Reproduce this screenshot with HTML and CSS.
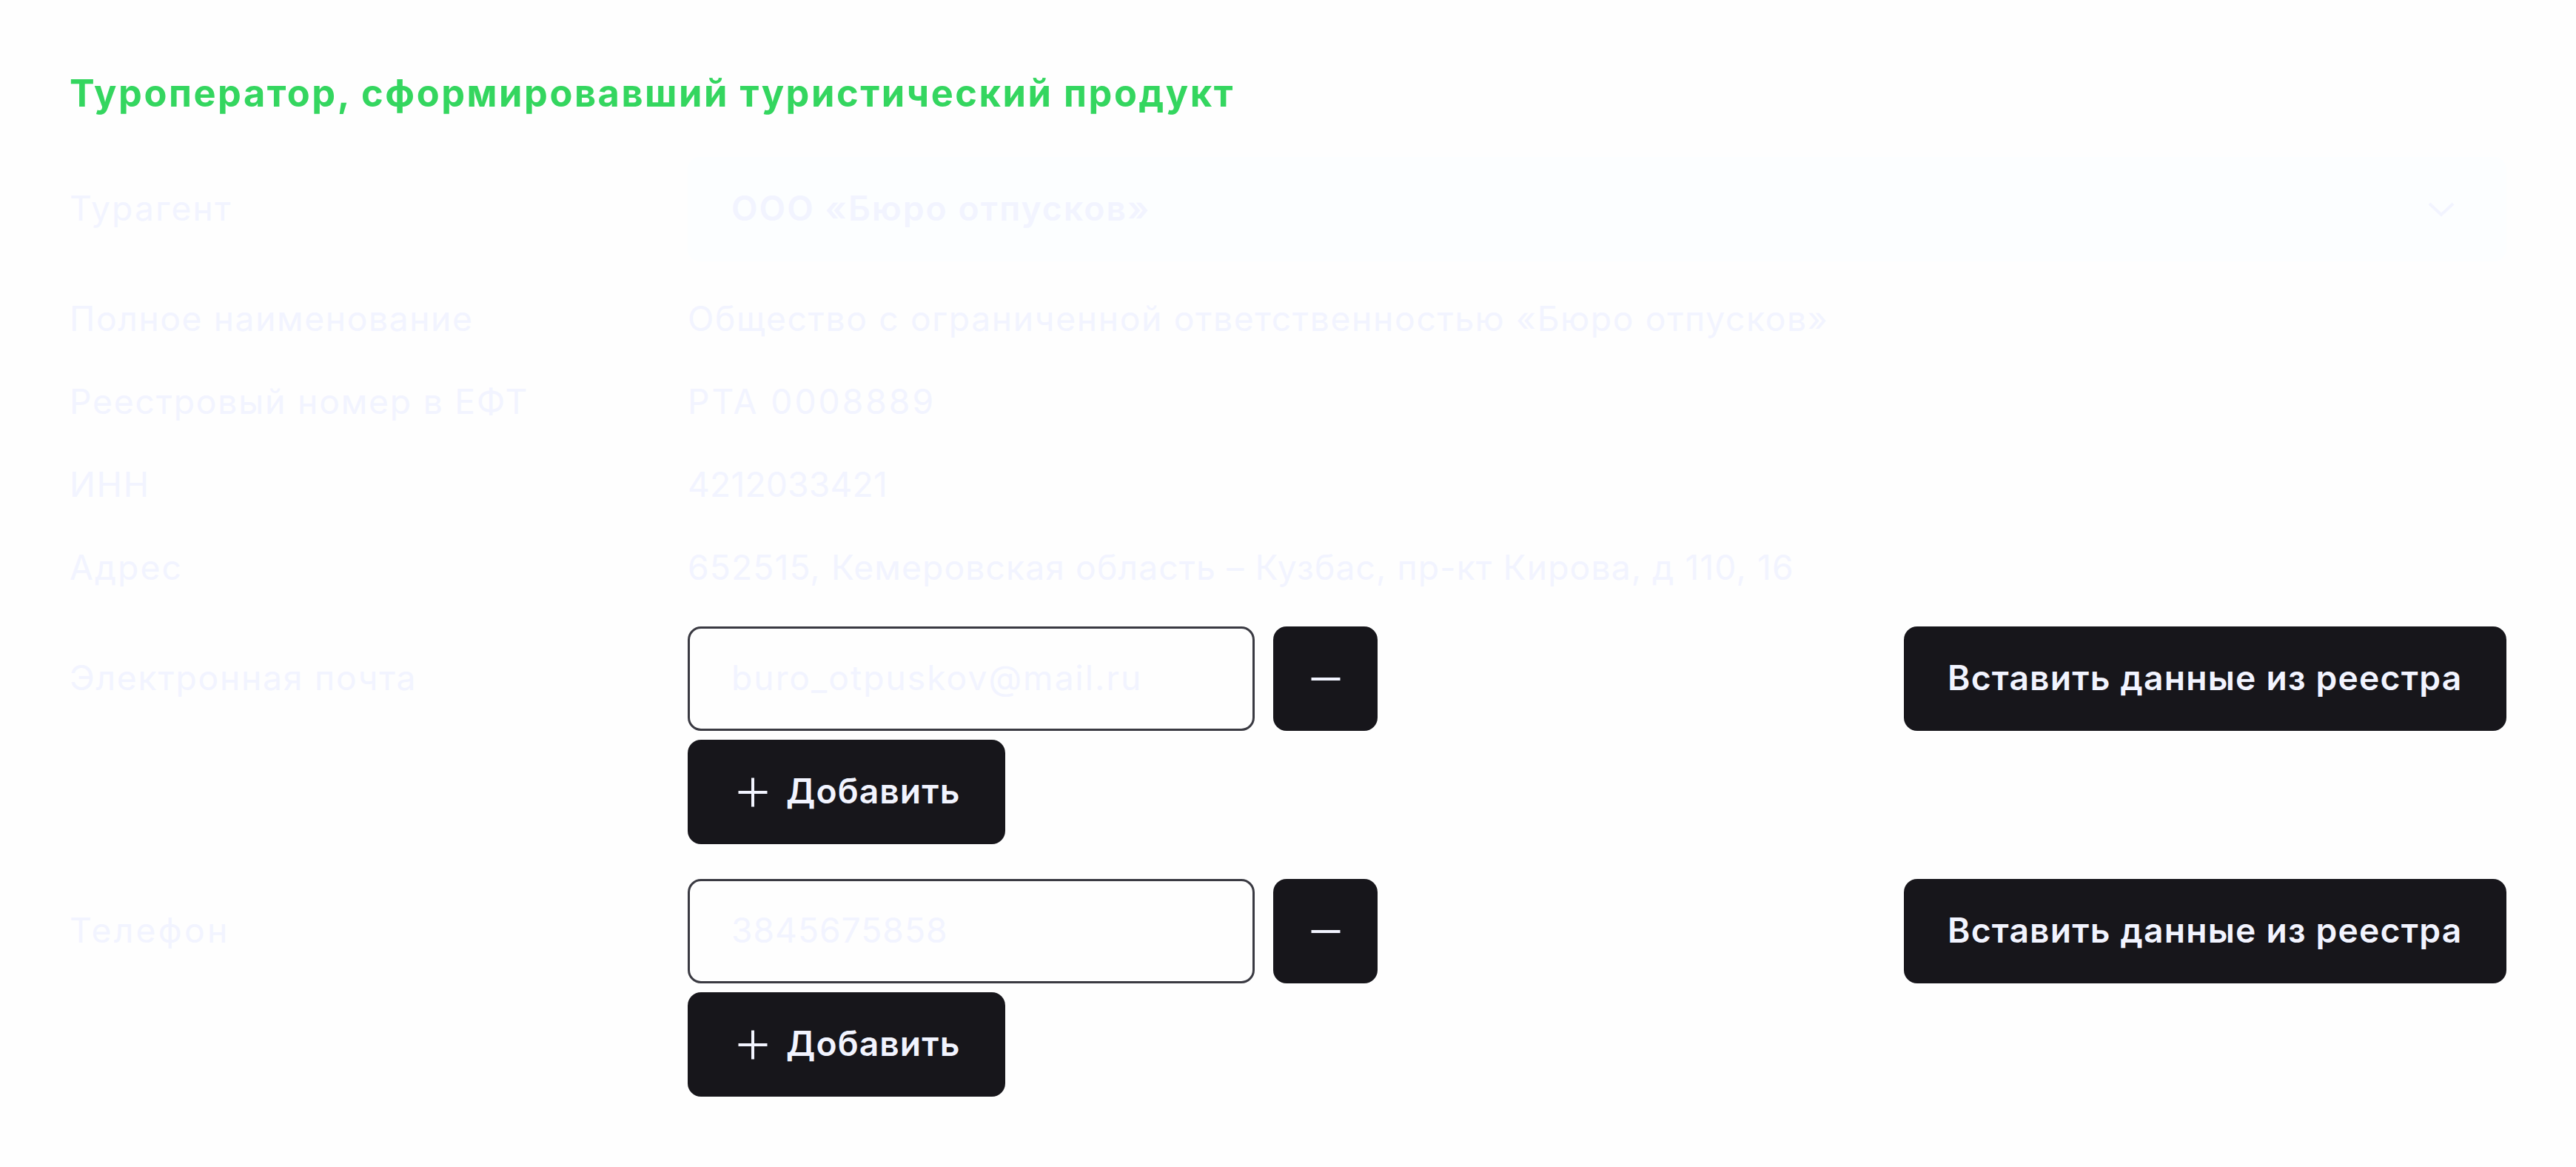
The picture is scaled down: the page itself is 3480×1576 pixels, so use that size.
FILE: index.html
```html
<!DOCTYPE html>
<html lang="ru">
<head>
<meta charset="utf-8">
<title>Туроператор</title>
<link rel="stylesheet" href="styles.css">
</head>
<body>
<main class="card">
  <h1 class="title">Туроператор, сформировавший туристический продукт</h1>

  <div class="row row-select">
    <span class="label label-agent">Турагент</span>
    <div class="select">
      <span class="select-value">ООО «Бюро отпусков»</span>
      <svg class="chevron" viewBox="0 0 36 20"><path d="M2 2 L18 17 L34 2"/></svg>
    </div>
  </div>

  <div class="details">
    <div class="row"><span class="label label-name">Полное наименование</span><span class="value value-name">Общество с ограниченной ответственностью «Бюро отпусков»</span></div>
    <div class="row"><span class="label label-reg">Реестровый номер в ЕФТ</span><span class="value value-reg">РТА 0008889</span></div>
    <div class="row"><span class="label label-inn">ИНН</span><span class="value value-inn">4212033421</span></div>
    <div class="row"><span class="label label-address">Адрес</span><span class="value value-address">652515, Кемеровская область – Кузбас, пр-кт Кирова, д 110, 16</span></div>
  </div>

  <div class="group">
    <span class="label label-mail">Электронная почта</span>
    <div class="fields">
      <div class="field-line">
        <div class="input input-mail">buro_otpuskov@mail.ru</div>
        <button class="btn btn-remove" aria-label="Удалить"><svg class="icon" viewBox="0 0 40 40"><path d="M0.5 20 H39.5"/></svg></button>
        <button class="btn btn-insert">Вставить данные из реестра</button>
      </div>
      <button class="btn btn-add"><svg class="icon" viewBox="0 0 40 40"><path d="M0.5 20 H39.5 M20 0.5 V39.5"/></svg><span>Добавить</span></button>
    </div>
  </div>

  <div class="group">
    <span class="label label-phone">Телефон</span>
    <div class="fields">
      <div class="field-line">
        <div class="input input-phone">3845675858</div>
        <button class="btn btn-remove" aria-label="Удалить"><svg class="icon" viewBox="0 0 40 40"><path d="M0.5 20 H39.5"/></svg></button>
        <button class="btn btn-insert">Вставить данные из реестра</button>
      </div>
      <button class="btn btn-add"><svg class="icon" viewBox="0 0 40 40"><path d="M0.5 20 H39.5 M20 0.5 V39.5"/></svg><span>Добавить</span></button>
    </div>
  </div>
</main>
</body>
</html>
```
FILE: styles.css
```css
* { box-sizing: border-box; }

body {
  margin: 0;
  background: #fefefe;
  color: #f2f4ff;
  font: 400 46.2px/1 Inter, "Liberation Sans", sans-serif;
  white-space: nowrap;
}

.card {
  display: flex;
  flex-direction: column;
  height: 1576px;
  padding: 86px 94px 0 94px;
}

.title {
  margin: 0 0 46px;
  color: #34d65f;
  font-size: 50.5px;
  font-weight: 700;
  line-height: 80px;
  letter-spacing: 2.54px;
}

.row,
.group {
  display: grid;
  grid-template-columns: 835px 1fr;
}

.row { align-items: center; height: 112px; padding-bottom: 1px; }
.row-select { height: 141px; padding: 0; }
.details { margin: 22px 0 23px; }

.row-select .label { padding-bottom: 3px; }
.label-agent { letter-spacing: 2.12px; }
.label-name { letter-spacing: 1.6px; }
.label-reg { letter-spacing: 1.81px; }
.label-inn { letter-spacing: 1.8px; }
.label-address { letter-spacing: 2.1px; }
.label-mail { letter-spacing: 1.78px; }
.label-phone { letter-spacing: 3.3px; }

.value-name { letter-spacing: 1.67px; }
.value-reg { letter-spacing: 3px; }
.value-inn { letter-spacing: 0.2px; }
.value-address { letter-spacing: 1.13px; }

.select {
  display: flex;
  align-items: center;
  justify-content: space-between;
  height: 141px;
  padding: 0 70px 3px 59px;
  border-radius: 16px;
  background: #fcfeff;
}

.select-value { font-weight: 600; letter-spacing: 2.1px; }

.chevron {
  width: 36px;
  height: 20px;
  margin-top: 4px;
  fill: none;
  stroke: #f2f4ff;
  stroke-width: 4;
}

.group + .group { margin-top: 47px; }
.group .label { line-height: 138px; }

.fields { display: flex; flex-direction: column; gap: 12px; }
.field-line { display: flex; }

.input {
  display: flex;
  align-items: center;
  width: 766px;
  height: 141px;
  padding: 0 56px 3px;
  border: 3px solid #3a3a42;
  border-radius: 18px;
  background: #fefefe;
}

.input-mail { letter-spacing: 2.05px; }
.input-phone { letter-spacing: 0.99px; }

.btn {
  display: flex;
  align-items: center;
  height: 141px;
  padding: 0 0 3px 59px;
  border: 0;
  border-radius: 18px;
  background: #17161b;
  color: #f2f4ff;
  font: inherit;
  font-weight: 600;
}

.btn-remove {
  justify-content: center;
  width: 141px;
  margin-left: 25px;
  padding: 0;
}

.btn-insert {
  width: 814px;
  margin-left: auto;
  letter-spacing: 1.2px;
}

.btn-add {
  gap: 25px;
  width: 429px;
  padding-left: 68px;
  letter-spacing: 1.1px;
}

.btn-add .icon { margin-top: 3px; }

.icon {
  width: 40px;
  height: 40px;
  fill: none;
  stroke: #f2f4ff;
  stroke-width: 4;
}
```
